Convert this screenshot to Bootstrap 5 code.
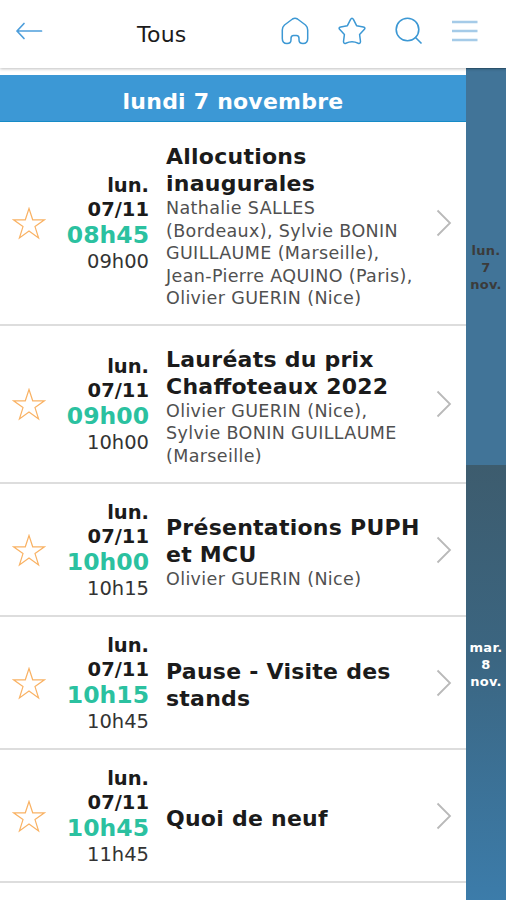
<!DOCTYPE html>
<html lang="fr">
<head>
<meta charset="utf-8">
<meta name="viewport" content="width=device-width, initial-scale=1">
<title>Programme</title>
<link href="https://cdn.jsdelivr.net/npm/bootstrap@5.3.0/dist/css/bootstrap.min.css" rel="stylesheet">
<style>
body{font-family:"DejaVu Sans",sans-serif;color:#1b1b1b;background:#fff}
.screen{width:506px;height:900px;overflow:hidden}
.topbar{height:68px;padding:0 27px 7px 15px;color:#3c98d4;box-shadow:0 1px 3px rgba(0,0,0,.25);z-index:2;position:relative;background:#fff}
.topbar svg,.agenda svg{fill:none;display:block;flex:none}
.page-title{font-size:22px;letter-spacing:.25px;line-height:28px;color:#1b1b1b;margin:9px 0 0 94px}
.tools{gap:29px}
.agenda{width:466px}
.day-title{height:47px;margin-top:7px;background:#3c98d5;border-bottom:1px solid #168bc6;color:#fff;font-size:22px;letter-spacing:.22px;line-height:53px;font-weight:700}
.session{border-bottom:2px solid #ddd;padding:0 14px 0 12px}
.fav{margin-top:2px}
.when{width:88px;margin-left:15px;padding-top:3px;font-size:19.5px;line-height:24px}
.start{font-size:23.5px;line-height:27px;color:#2bc1a0}
.finish{line-height:26px;color:#333}
.what{width:262px;margin-left:17px;padding-top:5px;white-space:nowrap}
.what h2{font-size:22px;letter-spacing:.25px;font-feature-settings:"liga";line-height:27px;font-weight:700;margin:0}
.what p{font-size:17.5px;line-height:22.5px;letter-spacing:.37px;color:#505050;margin:0}
.h-a{height:204px}.h-b{height:158px}.h-c{height:133px}
.h-a .what{padding-top:7px}
.days{width:40px;font-size:13px;letter-spacing:.25px;line-height:17px;font-weight:700}
.day-now{height:397px;background:#417498;color:#3b3b3b;border-top:1px solid #33607f}
.day-next{padding-bottom:36px;background:linear-gradient(#3d5c6e,#3b6580 42%,#3c7caa)}
</style>
<script src="https://cdn.jsdelivr.net/npm/bootstrap@5.3.0/dist/js/bootstrap.bundle.min.js"></script>
</head>
<body>
<svg class="d-none">
<symbol id="star" viewBox="0 0 34 34"><path d="M17 1.500L20.700 12.800H32.500L23 19.600L26.600 31L17 24L7.400 31L11 19.600L1.500 12.800H13.300Z" stroke="#f9b264" stroke-width="1.200"/></symbol>
<symbol id="next" viewBox="0 0 16 28"><path d="M1.500 1.500L14 14L1.500 26.500" stroke="#b9b9b9" stroke-width="1.800"/></symbol>
</svg>
<div class="screen d-flex flex-column">
<header class="topbar d-flex align-items-center flex-shrink-0">
<svg width="28" height="18" viewBox="0 0 28 18" stroke="#4d9edb" stroke-width="1.700" stroke-linecap="round" stroke-linejoin="round"><path d="M9 1.500L2 9L9 16.500M2 9H26.500"/></svg>
<h1 class="page-title">Tous</h1>
<div class="tools d-flex align-items-center ms-auto">
<svg width="28" height="28" viewBox="0 0 28 28" stroke="currentColor" stroke-width="1.500" stroke-linejoin="round"><path d="M11.500 2Q14 .500 16.500 2L24.500 8Q26.700 10 26.700 13V21.500Q26.700 26.500 22 26.500Q18 26.500 18 23V21.500Q18 18.500 15.500 18.500H12.500Q10 18.500 10 21.500V23Q10 26.500 6 26.500Q1.300 26.500 1.300 21.500V13Q1.300 10 3.500 8Z"/></svg>
<svg width="28" height="28" viewBox="0 0 28 28" stroke="currentColor" stroke-width="1.500" stroke-linejoin="round"><path d="M12.600 2.400Q14 0 15.400 2.400L18.600 8.700L25.300 9.900Q28 10.600 26.200 12.600L21.600 17.600L22.500 24.500Q22.400 27 20.200 26.200Q14 23.200 7.800 26.200Q5.600 27 5.500 24.500L6.400 17.600L1.800 12.600Q0 10.600 2.700 9.900L9.400 8.700Z"/></svg>
<svg width="28" height="28" viewBox="0 0 28 28" stroke="currentColor" stroke-width="1.600"><circle cx="12.500" cy="12.500" r="11.300"/><path d="M20 20L26.500 26.500"/></svg>
<svg width="27" height="28" viewBox="0 0 27 28" stroke="#a5cbe8" stroke-width="2.400"><path d="M0 5H25.500M0 14H25.500M0 23H25.500"/></svg>
</div>
</header>
<div class="d-flex flex-grow-1">
<main class="agenda">
<div class="day-title text-center">lundi 7 novembre</div>
<article class="session d-flex align-items-center h-a"><svg class="fav" width="34" height="34"><use href="#star"/></svg><div class="when text-end fw-bold">lun.<br>07/11<div class="start">08h45</div><div class="finish fw-normal">09h00</div></div><div class="what"><h2>Allocutions<br>inaugurales</h2><p>Nathalie SALLES<br>(Bordeaux), Sylvie BONIN<br>GUILLAUME (Marseille),<br>Jean-Pierre AQUINO (Paris),<br>Olivier GUERIN (Nice)</p></div><svg class="ms-auto" width="16" height="28"><use href="#next"/></svg></article>
<article class="session d-flex align-items-center h-b"><svg class="fav" width="34" height="34"><use href="#star"/></svg><div class="when text-end fw-bold">lun.<br>07/11<div class="start">09h00</div><div class="finish fw-normal">10h00</div></div><div class="what"><h2>Lauréats du prix<br>Chaffoteaux 2022</h2><p>Olivier GUERIN (Nice),<br>Sylvie BONIN GUILLAUME<br>(Marseille)</p></div><svg class="ms-auto" width="16" height="28"><use href="#next"/></svg></article>
<article class="session d-flex align-items-center h-c"><svg class="fav" width="34" height="34"><use href="#star"/></svg><div class="when text-end fw-bold">lun.<br>07/11<div class="start">10h00</div><div class="finish fw-normal">10h15</div></div><div class="what"><h2>Présentations PUPH<br>et MCU</h2><p>Olivier GUERIN (Nice)</p></div><svg class="ms-auto" width="16" height="28"><use href="#next"/></svg></article>
<article class="session d-flex align-items-center h-c"><svg class="fav" width="34" height="34"><use href="#star"/></svg><div class="when text-end fw-bold">lun.<br>07/11<div class="start">10h15</div><div class="finish fw-normal">10h45</div></div><div class="what"><h2>Pause - Visite des<br>stands</h2></div><svg class="ms-auto" width="16" height="28"><use href="#next"/></svg></article>
<article class="session d-flex align-items-center h-c"><svg class="fav" width="34" height="34"><use href="#star"/></svg><div class="when text-end fw-bold">lun.<br>07/11<div class="start">10h45</div><div class="finish fw-normal">11h45</div></div><div class="what"><h2>Quoi de neuf</h2></div><svg class="ms-auto" width="16" height="28"><use href="#next"/></svg></article>
</main>
<aside class="days d-flex flex-column text-center">
<div class="day-now d-flex align-items-center justify-content-center">lun.<br>7<br>nov.</div>
<div class="day-next d-flex align-items-center justify-content-center flex-grow-1 text-white">mar.<br>8<br>nov.</div>
</aside>
</div>
</div>
</body>
</html>
